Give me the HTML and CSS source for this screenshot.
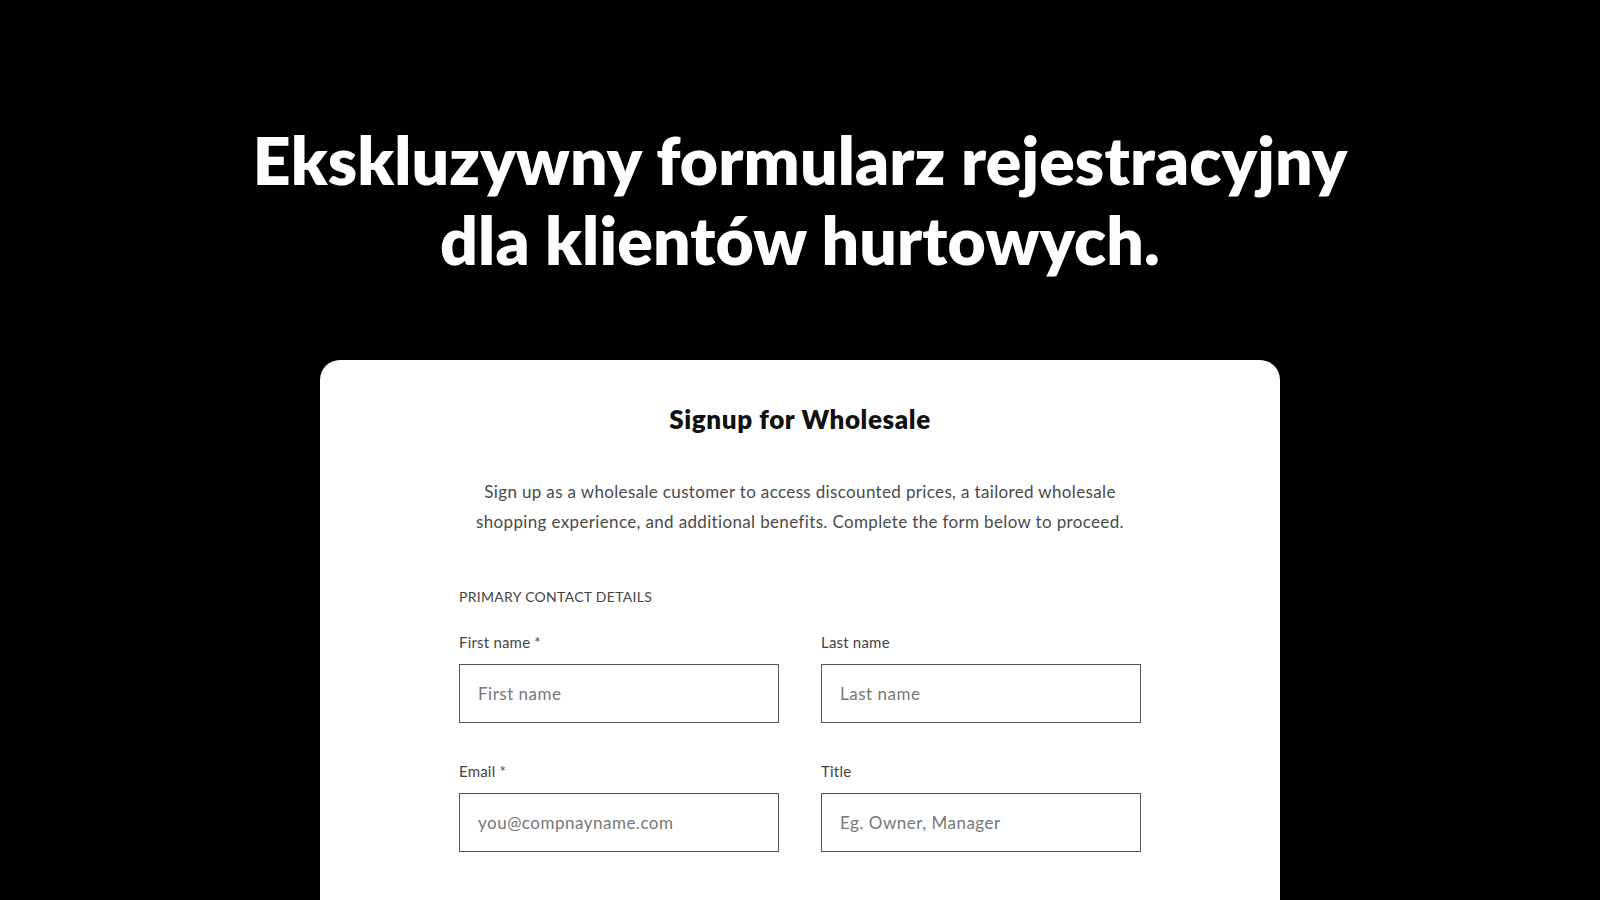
FILE: index.html
```html
<!DOCTYPE html>
<html lang="pl">
<head>
    <meta charset="UTF-8">
    <meta name="viewport" content="width=device-width, initial-scale=1.0">
    <title>Wholesale Signup</title>
    <link rel="stylesheet" href="styles.css">
</head>
<body>
    <div class="page">
        <h1 class="hero">Ekskluzywny formularz rejestracyjny<br>dla klientów hurtowych.</h1>
        <div class="card">
            <h2>Signup for Wholesale</h2>
            <p class="intro">Sign up as a wholesale customer to access discounted prices, a tailored wholesale shopping experience, and additional benefits. Complete the form below to proceed.</p>
            <form class="signup">
                <div class="section-title">Primary contact details</div>
                <div class="fields">
                    <div class="field">
                        <label for="first">First name *</label>
                        <input type="text" id="first" placeholder="First name">
                    </div>
                    <div class="field">
                        <label for="last">Last name</label>
                        <input type="text" id="last" placeholder="Last name">
                    </div>
                    <div class="field">
                        <label for="email">Email *</label>
                        <input type="email" id="email" placeholder="you@compnayname.com">
                    </div>
                    <div class="field">
                        <label for="title">Title</label>
                        <input type="text" id="title" placeholder="Eg. Owner, Manager">
                    </div>
                </div>
            </form>
        </div>
    </div>
</body>
</html>
```

FILE: styles.css
```css
body {
    margin: 0;
    padding: 0;
    background-color: #000;
    font-family: Lato, "Open Sans", sans-serif;
    overflow: hidden;
}

.page {
    padding-top: 120px;
}

.hero {
    margin: 0;
    color: #fff;
    text-align: center;
    font-size: 66px;
    line-height: 80px;
    font-weight: 800;
    letter-spacing: 0.15px;
}

.card {
    width: 960px;
    margin: 80px auto 0;
    padding: 43px 139px 80px;
    box-sizing: border-box;
    background: #fff;
    border-radius: 20px;
}

.card h2 {
    margin: 0;
    text-align: center;
    font-size: 26px;
    line-height: 32px;
    font-weight: 800;
    letter-spacing: 0.6px;
    color: #111;
}

.intro {
    margin: 42px auto 0;
    max-width: 690px;
    text-align: center;
    font-size: 17px;
    line-height: 30px;
    letter-spacing: 0.35px;
    color: #4a4a4a;
}

.section-title {
    margin-top: 50px;
    font-size: 14px;
    line-height: 20px;
    letter-spacing: 0.3px;
    text-transform: uppercase;
    color: #444;
}

.fields {
    display: grid;
    grid-template-columns: 320px 320px;
    column-gap: 42px;
    row-gap: 38px;
    margin-top: 25px;
}

.field {
    display: flex;
    flex-direction: column;
}

label {
    font-size: 15px;
    line-height: 20px;
    letter-spacing: 0.2px;
    color: #444;
}

input {
    margin-top: 12px;
    height: 59px;
    padding: 0 18px;
    box-sizing: border-box;
    border: 1.5px solid #555;
    border-radius: 0;
    font-family: inherit;
    font-size: 17px;
    letter-spacing: 0.5px;
    color: #222;
    outline: none;
}

input::placeholder {
    color: #777;
}
```
